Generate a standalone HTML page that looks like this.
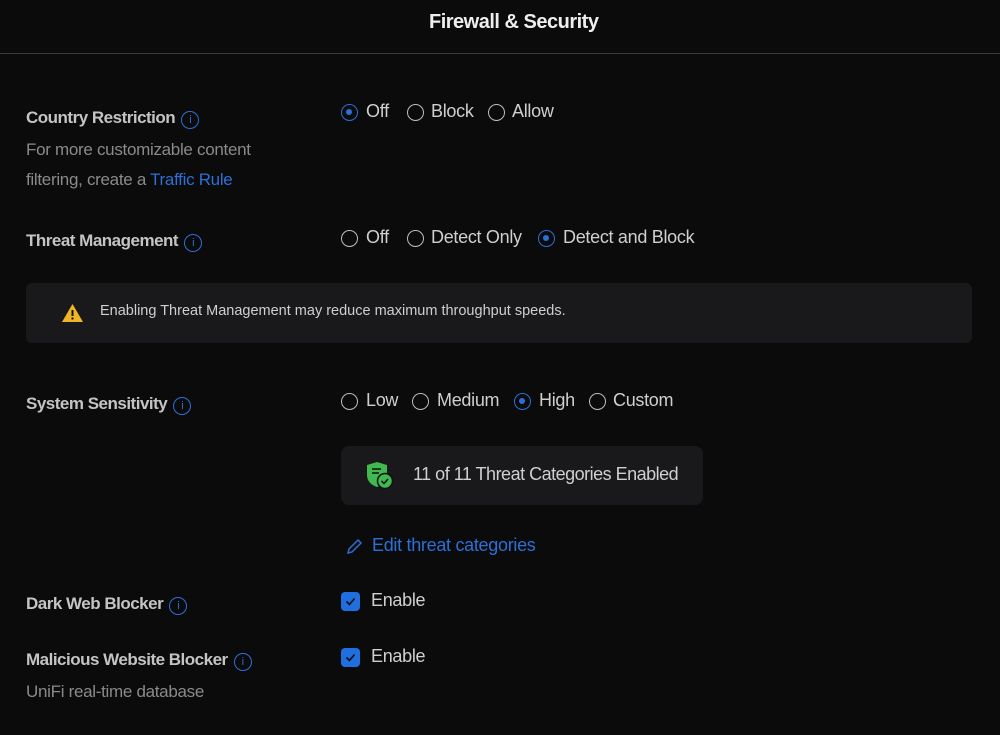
<!DOCTYPE html><html><head><style>
body{margin:0;width:1000px;height:735px;background:#0b0b0c;font-family:"Liberation Sans",sans-serif;color:#d0d0d2;position:relative;overflow:hidden}
.a{position:absolute;white-space:nowrap}
.t{font-size:20px;font-weight:bold;color:#eee;letter-spacing:-0.5px}
.l{font-size:17px;font-weight:bold;color:#c4c4c6;letter-spacing:-0.5px}
.s{font-size:17px;color:#8a8a8d;letter-spacing:-0.3px}
.o{font-size:18px;color:#cfcfd1;letter-spacing:-0.3px}
.i{display:inline-block;width:16px;height:16px;border:1.5px solid #2d6fd6;border-radius:50%;color:#2d6fd6;font-size:11px;text-align:center;line-height:16px;vertical-align:0px;margin-left:6px;font-weight:normal}
.r{position:absolute;width:17px;height:17px;border:1.5px solid #bdbdbf;border-radius:50%;box-sizing:border-box}
.r.on{border-color:#2d6fd6}
.r.on:after{content:"";position:absolute;left:4px;top:4px;width:6px;height:6px;border-radius:50%;background:#2d6fd6}
.c{position:absolute;width:19px;height:19px;background:#1f6fe0;border-radius:4px}
</style></head><body>
<div class="a t" style="left:429px;top:11px">Firewall &amp; Security</div>
<div class="a" style="left:0;top:53px;width:1000px;height:1px;background:#3a3a3c"></div>

<div class="a l" style="left:26px;top:108px">Country Restriction<span class="i">i</span></div>
<div class="a s" style="left:26px;top:140px">For more customizable content</div>
<div class="a s" style="left:26px;top:170px">filtering, create a <span style="color:#2d6fd6">Traffic Rule</span></div>
<div class="r on" style="left:341px;top:104px"></div><div class="a o" style="left:366px;top:101px">Off</div>
<div class="r" style="left:407px;top:104px"></div><div class="a o" style="left:431px;top:101px">Block</div>
<div class="r" style="left:488px;top:104px"></div><div class="a o" style="left:512px;top:101px">Allow</div>

<div class="a l" style="left:26px;top:231px">Threat Management<span class="i">i</span></div>
<div class="r" style="left:341px;top:230px"></div><div class="a o" style="left:366px;top:227px">Off</div>
<div class="r" style="left:407px;top:230px"></div><div class="a o" style="left:431px;top:227px">Detect Only</div>
<div class="r on" style="left:538px;top:230px"></div><div class="a o" style="left:563px;top:227px">Detect and Block</div>

<div class="a" style="left:26px;top:283px;width:946px;height:60px;background:#19191b;border-radius:6px"></div>
<svg class="a" style="left:61px;top:303px" width="23" height="20" viewBox="0 0 23 20"><path d="M11.5 1L22 19H1Z" fill="#f0b429"/><rect x="10.5" y="7" width="2" height="6" fill="#111"/><rect x="10.5" y="14.5" width="2" height="2" fill="#111"/></svg>
<div class="a" style="left:100px;top:303px;font-size:14.5px;color:#cfcfd1">Enabling Threat Management may reduce maximum throughput speeds.</div>

<div class="a l" style="left:26px;top:394px">System Sensitivity<span class="i">i</span></div>
<div class="r" style="left:341px;top:393px"></div><div class="a o" style="left:366px;top:390px">Low</div>
<div class="r" style="left:412px;top:393px"></div><div class="a o" style="left:437px;top:390px">Medium</div>
<div class="r on" style="left:514px;top:393px"></div><div class="a o" style="left:539px;top:390px">High</div>
<div class="r" style="left:589px;top:393px"></div><div class="a o" style="left:613px;top:390px">Custom</div>

<div class="a" style="left:341px;top:446px;width:362px;height:59px;background:#19191b;border-radius:8px"></div>
<svg class="a" style="left:366px;top:462px" width="28" height="28" viewBox="0 0 28 28"><path d="M1 3L11 0L21 3V13C21 19 17 23 11 25C5 23 1 19 1 13Z" fill="#3fb950"/><path d="M6 7h9M6 11h7" stroke="#111" stroke-width="1.6"/><circle cx="19" cy="19" r="7.5" fill="#3fb950" stroke="#111" stroke-width="1.5"/><path d="M15.5 19l2.5 2.5 4-4.5" stroke="#111" stroke-width="1.6" fill="none"/></svg>
<div class="a o" style="left:413px;top:464px;letter-spacing:-0.5px">11 of 11 Threat Categories Enabled</div>

<svg class="a" style="left:346px;top:537px" width="18" height="18" viewBox="0 0 18 18"><path d="M2 16l1-4L12 3l3 3-9 9z" fill="none" stroke="#2d6fd6" stroke-width="1.5"/></svg>
<div class="a o" style="left:372px;top:535px;color:#2d6fd6">Edit threat categories</div>

<div class="a l" style="left:26px;top:594px">Dark Web Blocker<span class="i">i</span></div>
<div class="c" style="left:341px;top:592px"></div><svg class="a" style="left:341px;top:592px" width="19" height="19"><path d="M5.5 9.5l3 3 5-6" stroke="#0b0b0c" stroke-width="1.6" fill="none"/></svg>
<div class="a o" style="left:371px;top:590px">Enable</div>

<div class="a l" style="left:26px;top:650px">Malicious Website Blocker<span class="i">i</span></div>
<div class="a s" style="left:26px;top:682px">UniFi real-time database</div>
<div class="c" style="left:341px;top:648px"></div><svg class="a" style="left:341px;top:648px" width="19" height="19"><path d="M5.5 9.5l3 3 5-6" stroke="#0b0b0c" stroke-width="1.6" fill="none"/></svg>
<div class="a o" style="left:371px;top:646px">Enable</div>
</body></html>
